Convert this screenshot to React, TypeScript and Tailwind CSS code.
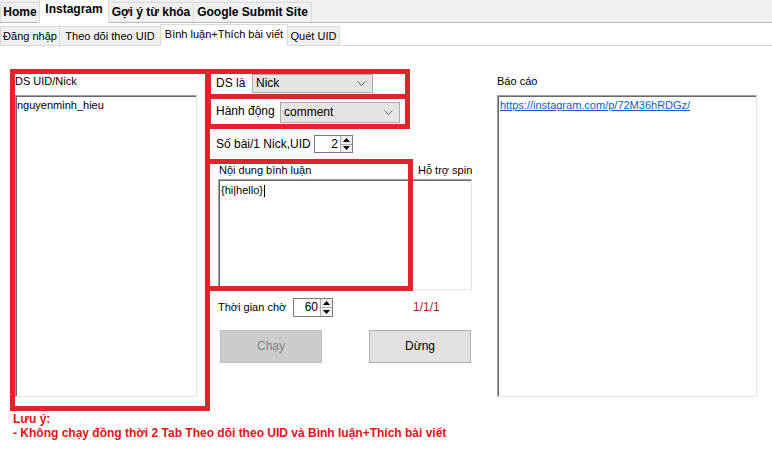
import React from 'react'

const mainTabs = [
  { label: 'Home', w: 'w-[40px]' },
  { label: 'Instagram', w: 'w-[70px]', active: true },
  { label: 'Gợi ý từ khóa', w: 'w-[86px]' },
  { label: 'Google Submit Site', w: 'w-[119px]' },
]

const subTabs = [
  { label: 'Đăng nhập', w: 'w-[60px]' },
  { label: 'Theo dõi theo UID', w: 'w-[102px]' },
  { label: 'Bình luận+Thích bài viết', w: 'w-[128px]', active: true },
  { label: 'Quét UID', w: 'w-[53px]' },
]

const sunken =
  'bg-white border border-t-[#a0a0a0] border-l-[#a0a0a0] border-r-[#e3e3e3] border-b-[#e3e3e3] shadow-[inset_1px_1px_0_#696969]'

function Combo({ value, className }: { value: string; className: string }) {
  return (
    <div
      className={`flex items-center justify-between bg-[#e5e5e5] border border-[#adadad] pl-[3px] pr-[6px] ${className}`}
    >
      <span className="text-[12px]">{value}</span>
      <svg width="9" height="5" viewBox="0 0 9 5" className="shrink-0">
        <polyline points="0.5,0.5 4.5,4.5 8.5,0.5" fill="none" stroke="#606060" strokeWidth="1" />
      </svg>
    </div>
  )
}

function Spinner({ value, className }: { value: string; className: string }) {
  return (
    <div className={`flex bg-white border border-[#7a7a7a] ${className}`}>
      <span className="flex-1 text-right pr-[2px] text-[12px] leading-[16px]">{value}</span>
      <div className="flex flex-col w-[12px] border-l border-[#adadad]">
        <div className="flex-1 flex items-center justify-center bg-[#f0f0f0] border-b border-[#adadad]">
          <svg width="7" height="4" viewBox="0 0 7 4">
            <polygon points="0,4 3.5,0 7,4" fill="#000" />
          </svg>
        </div>
        <div className="flex-1 flex items-center justify-center bg-[#f0f0f0]">
          <svg width="7" height="4" viewBox="0 0 7 4">
            <polygon points="0,0 3.5,4 7,0" fill="#000" />
          </svg>
        </div>
      </div>
    </div>
  )
}

export default function App() {
  return (
    <div className="w-[772px] h-[461px] overflow-hidden bg-white text-[11px] leading-[13px] text-black font-['Liberation_Sans',Arial,sans-serif]">
      {/* main tabs */}
      <div className="flex items-end h-[23px] bg-[#f0f0f0] border-b border-[#b9b9b9]">
        {mainTabs.map((t) => (
          <div
            key={t.label}
            className={[
              'flex items-center justify-center font-bold text-[12px] border border-[#d9d9d9] -ml-px first:ml-0',
              t.w,
              t.active ? 'h-[24px] -mb-px pb-[3px] bg-white border-b-white relative z-10' : 'h-[20px] bg-[#f0f0f0] border-b-0',
            ].join(' ')}
          >
            {t.label}
          </div>
        ))}
      </div>

      {/* sub tabs */}
      <div className="flex items-end h-[23px] bg-white border-b border-[#d9d9d9]">
        {subTabs.map((t) => (
          <div
            key={t.label}
            className={[
              'flex items-center justify-center text-[11px] border border-[#d9d9d9] -ml-px first:ml-0',
              t.w,
              t.active ? 'h-[22px] -mb-px pb-[2px] bg-white border-b-white relative z-10' : 'h-[19px] bg-[#f0f0f0] border-b-0',
            ].join(' ')}
          >
            {t.label}
          </div>
        ))}
      </div>

      {/* content */}
      <div className="flex pt-[23px] pl-[10px]">
        {/* left list */}
        <div className="w-[200px] h-[342px] border-[5px] border-[#e5222b] flex flex-col">
          <span className="mt-[1px]">DS UID/Nick</span>
          <div className={`mt-[7px] w-[182px] h-[302px] pl-[1px] pt-[3px] ${sunken}`}>nguyenminh_hieu</div>
        </div>

        {/* middle */}
        <div className="relative -ml-[4px] w-[267px]">
          <div className="w-[204px] h-[30px] border-[5px] border-[#e5222b] flex items-start pl-[5px]">
            <span className="w-[36px] text-[12px] leading-[18px]">DS là</span>
            <Combo value="Nick" className="w-[121px] h-[19px]" />
          </div>
          <div className="-mt-[5px] w-[204px] h-[35px] border-[5px] border-[#e5222b] flex items-center pl-[5px]">
            <span className="w-[64px] text-[12px]">Hành động</span>
            <Combo value="comment" className="w-[120px] h-[21px] mt-[2px]" />
          </div>

          <div className="flex items-center mt-[6px] pl-[10px]">
            <span className="w-[98px] text-[12px]">Số bài/1 Nick,UID</span>
            <Spinner value="2" className="w-[39px] h-[18px]" />
          </div>

          <div className="flex mt-[11px] pl-[13px]">
            <span className="w-[199px]">Nội dung bình luận</span>
            <span>Hỗ trợ spin</span>
          </div>
          <div className={`ml-[12px] mt-[2px] w-[254px] h-[111px] pl-[2px] pt-[4px] ${sunken}`}>
            {'{hi|hello}'}
            <span className="inline-block w-px h-[12px] bg-black align-middle ml-px" />
          </div>

          {/* annotation over the comment box */}
          <div className="absolute left-[-1px] top-[90px] w-[208px] h-[132px] border-[5px] border-[#e5222b] pointer-events-none" />

          <div className="flex items-center mt-[8px] pl-[12px]">
            <span className="w-[75px]">Thời gian chờ</span>
            <Spinner value="60" className="w-[40px] h-[19px]" />
            <span className="ml-[80px] text-[12px] text-[#c0141e]">1/1/1</span>
          </div>

          <div className="flex mt-[13px] pl-[14px] gap-[47px]">
            <button className="w-[102px] h-[33px] bg-[#cccccc] border border-[#bfbfbf] text-[12px] text-[#838383]">
              Chạy
            </button>
            <button className="w-[102px] h-[33px] bg-[#e1e1e1] border border-[#adadad] text-[12px]">Dừng</button>
          </div>
        </div>

        {/* report */}
        <div className="ml-[24px] flex flex-col">
          <span className="mt-[6px]">Báo cáo</span>
          <div className={`mt-[7px] w-[260px] h-[302px] pl-[2px] pt-[3px] ${sunken}`}>
            <span className="text-[#0066cc] underline">https://instagram.com/p/72M36hRDGz/</span>
          </div>
        </div>
      </div>

      {/* note */}
      <div className="pl-[13px] mt-[1px] font-bold text-[12px] text-[#e8101a] leading-[14px]">
        <p>Lưu ý:</p>
        <p>- Không chạy đồng thời 2 Tab Theo dõi theo UID và Bình luận+Thích bài viết</p>
      </div>
    </div>
  )
}
